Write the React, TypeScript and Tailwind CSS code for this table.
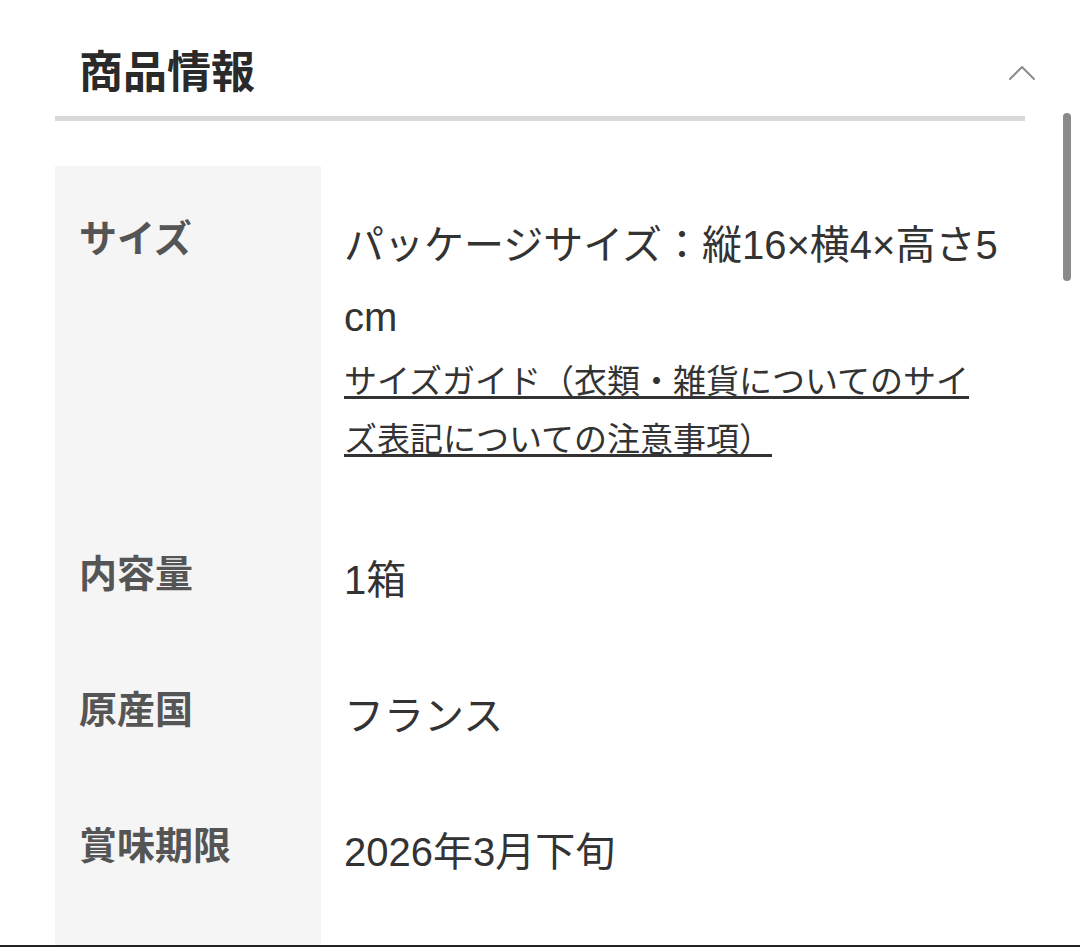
// Product info panel (商品情報)

const font = "font-['Liberation_Sans','Noto_Sans_CJK_JP',sans-serif]";

type Row = {
	label: string;
	value: React.ReactNode;
};

const rows: Row[] = [
	{ label: "内容量", value: "1箱" },
	{ label: "原産国", value: "フランス" },
	{ label: "賞味期限", value: "2026年3月下旬" },
];

function Chevron() {
	return (
		<svg width="28" height="18" viewBox="0 0 28 18" fill="none" className="-mr-[11px]">
			<polyline points="2,15 14,3 26,15" stroke="#8c8c8c" strokeWidth="2" strokeLinecap="round" strokeLinejoin="round" />
		</svg>
	);
}

export default function App() {
	return (
		<div className={`relative h-[947px] w-[1080px] overflow-hidden border-b-2 border-[#222] bg-white ${font}`}>
			<div className="mx-[55px]">
				{/* Header */}
				<div className="flex items-center justify-between pl-[24px] pt-[44px] pb-[14px]">
					<h2 className="text-[44px] leading-[58px] font-bold text-[#2a2a2a]">商品情報</h2>
					<Chevron />
				</div>
				<div className="h-[5px] bg-[#d9d9d9]" />

				{/* Table */}
				<div className="mt-[45px] grid grid-cols-[266px_1fr]">
					<div className="bg-[#f5f5f5] px-[24px] pt-[43px] pb-[43px] text-[38px] leading-[60px] font-bold text-[#555]">
						サイズ
					</div>
					<div className="pl-[23px] pt-[43px] pb-[43px] text-[#333]">
						<p className="whitespace-nowrap text-[40px] leading-[72px]">
							パッケージサイズ：縦16×横4×高さ5
							<br />
							cm
						</p>
						<a
							href="#"
							className="block whitespace-nowrap text-[33px] leading-[58px] text-[#333] underline decoration-[3px] underline-offset-[3px]"
						>
							サイズガイド（衣類・雑貨についてのサイ
							<br />
							ズ表記についての注意事項）
						</a>
					</div>

					{rows.map((row) => (
						<div key={row.label} className="contents">
							<div className="bg-[#f5f5f5] px-[24px] py-[32px] text-[38px] leading-[60px] font-bold text-[#555]">
								{row.label}
							</div>
							<div className="pl-[23px] py-[32px] text-[40px] leading-[72px] text-[#333]">{row.value}</div>
						</div>
					))}

					<div className="h-[40px] bg-[#f5f5f5]" />
					<div />
				</div>
			</div>

			{/* Scrollbar */}
			<div className="absolute top-[113px] left-[1063px] h-[168px] w-[8px] rounded-full bg-[#8a8a8a]" />
		</div>
	);
}
